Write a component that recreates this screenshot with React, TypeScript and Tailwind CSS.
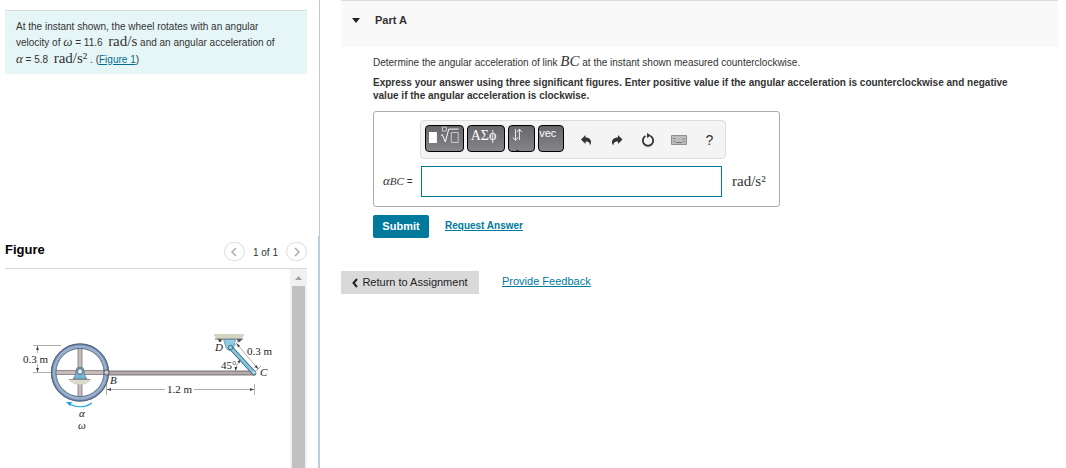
import type { ReactNode } from "react";

function MathText({ children }: { children: ReactNode }) {
    return <span className="font-['Liberation_Serif','DejaVu_Serif',serif] text-[15px] leading-none">{children}</span>;
}

function Greek({ children }: { children: ReactNode }) {
    return <i className="font-['Liberation_Serif','DejaVu_Serif',serif] text-[13px] leading-none">{children}</i>;
}

function ProblemStatement() {
    return (
        <div className="mt-[10px] mr-3 ml-[5px] min-h-16 border-t border-[#d5dcdc] bg-[#e6f6f7] px-[11px] pt-[9px] text-[10px] leading-[14px] text-[#333]">
            <p>
                At the instant shown, the wheel rotates with an angular
                <br />
                velocity of <Greek>ω</Greek> = 11.6 &nbsp;<MathText>rad/s</MathText> and an angular acceleration of
            </p>
            <p className="mt-px">
                <Greek>α</Greek> = 5.8 &nbsp;<MathText>rad/s²</MathText> . (<a href="#figure" className="text-[#006f8f] underline">Figure 1</a>)
            </p>
        </div>
    );
}

function WheelDiagram() {
    return (
        <svg viewBox="5 320 285 148" className="mt-[51px] block h-[148px] w-[285px] shrink-0" role="img" aria-label="Wheel linked to rod BC">
            <defs>
                <radialGradient id="rim" gradientUnits="userSpaceOnUse" cx="80" cy="372.5" r="29">
                    <stop offset=".8" stopColor="#7890ac" />
                    <stop offset=".9" stopColor="#a0b8d4" />
                    <stop offset="1" stopColor="#55668a" />
                </radialGradient>
            </defs>

            {/* rod */}
            <rect x="106" y="371" width="149" height="4" fill="#b5abab" stroke="#635c5e" strokeWidth=".8" />

            {/* wheel */}
            <rect x="78" y="347" width="4" height="51" fill="#c6baba" stroke="#81797d" strokeWidth=".8" />
            <rect x="54" y="370.500" width="52" height="4" fill="#c6baba" stroke="#81797d" strokeWidth=".8" />
            <circle cx="80" cy="372.5" r="26.5" fill="none" stroke="url(#rim)" strokeWidth="5" />
            <circle cx="80" cy="372.5" r="28.700" fill="none" stroke="#4e5b78" strokeWidth=".8" />
            <circle cx="80" cy="372.5" r="24" fill="none" stroke="#566985" strokeWidth=".8" />
            <path d="M69 379.500h21.500q-3 5-10.500 5t-11-5z" fill="#dcdccc" stroke="#bdbdae" strokeWidth=".5" />
            <path d="M69 379.500h21.500" stroke="#8c8c80" strokeWidth=".8" />
            <path d="M76 371a4 4 0 0 1 8 0l1 5 2 3H73l2-3z" fill="#79b5d1" stroke="#4c7389" strokeWidth=".7" />
            <circle cx="80" cy="371.500" r="3" fill="#c4ced4" stroke="#4b5662" strokeWidth=".8" />
            <circle cx="80" cy="371.500" r="1.200" fill="#f4f4f4" />
            <circle cx="106.500" cy="372.500" r="2.600" fill="#c6cbd2" stroke="#444" strokeWidth=".8" />

            {/* pin support and short link */}
            <path d="M214 334h30q0 4-4 4.500h-22q-4-.5-4-4.500z" fill="#d5d3c2" />
            <path d="M215 339h28" stroke="#6a6962" strokeWidth="1" />
            <path d="M218 339h4l-1 3h-2zM237 339h5l-2 3h-2z" fill="#555" />
            <path d="M223.500 339.500h12l-2 9q-4 4-7 0z" fill="#92c9e3" stroke="#56849d" strokeWidth=".7" />
            <path d="M231 348L254 373" stroke="#355f75" strokeWidth="4.500" strokeLinecap="round" />
            <path d="M231 348L254 373" stroke="#84c4e0" strokeWidth="3" strokeLinecap="round" />
            <circle cx="230.500" cy="347.500" r="2.300" fill="#8bc6df" stroke="#355f75" strokeWidth=".8" />
            <circle cx="254" cy="372.500" r="1.500" fill="#b8dce9" />

            {/* dimension lines */}
            <g stroke="#777" strokeWidth=".6" fill="none">
                <path d="M33 345.500h28M33 372.500h18M37.500 346v7M37.500 364v8" />
                <path d="M106.500 380v15M107 389.500h58M194 389.500h60M254.500 384v11" />
                <path d="M236.500 343.500L258 369M235 345l4-4M256 371l5-5M235.500 370q1-6 4-9" />
            </g>
            <g fill="#444">
                <path d="M37.500 346l-1.500 4h3zM37.500 372l-1.500-4h3z" />
                <path d="M107 389.500l4-1.500v3zM254 389.500l-4-1.500v3z" />
                <path d="M236.500 343.500l1.500 4 2-2zM258.500 369l-4-2 2-2z" />
                <path d="M240.500 359.500l-3 2 2 2zM235.500 371l-1-4h3z" />
            </g>
            <path d="M92 403q-10 7-23 1" stroke="#18a7e0" strokeWidth="1.200" fill="none" />
            <path d="M66 402l6 0-2 4z" fill="#18a7e0" />

            <g fill="#222" className="font-['Liberation_Serif',serif]" fontSize="11">
                <text x="23" y="363">0.3 m</text>
                <text x="167" y="393">1.2 m</text>
                <text x="247" y="355">0.3 m</text>
                <text x="221" y="369">45°</text>
                <g fontStyle="italic">
                    <text x="110" y="384">B</text>
                    <text x="215" y="351">D</text>
                    <text x="260" y="376">C</text>
                    <text x="79" y="417">α</text>
                    <text x="78" y="429">ω</text>
                </g>
            </g>
        </svg>
    );
}

function PagerButton({ label, path }: { label: string; path: string }) {
    return (
        <button type="button" aria-label={label} className="flex h-[19px] w-[21px] items-center justify-center rounded-full border border-[#ddd] bg-white">
            <svg viewBox="0 0 8 10" className="h-[10px] w-2" fill="none" stroke="#aaa" strokeWidth="1.500">
                <path d={path} />
            </svg>
        </button>
    );
}

function FigurePanel() {
    return (
        <section id="figure" className="flex grow flex-col border-r-2 border-[#b9cde0] pr-[11px] pl-[5px]">
            <div className="flex h-[33px] items-start border-b border-[#d9d9d9]">
                <h2 className="grow pt-[6px] text-[13px] leading-4 font-bold text-black">Figure</h2>
                <div className="flex items-center pt-[6px] text-[10px] leading-4 text-[#333]">
                    <PagerButton label="Previous figure" path="M6 1L2 5l4 4" />
                    <span className="px-2 pt-[2px]">1 of 1</span>
                    <PagerButton label="Next figure" path="M2 1l4 4-4 4" />
                </div>
            </div>
            <div className="flex grow">
                <div className="min-w-0 grow overflow-hidden">
                    <WheelDiagram />
                </div>
                <div className="flex w-[17px] shrink-0 flex-col items-center bg-[#f1f1f1]">
                    <svg viewBox="0 0 7 4" className="mt-[7px] mb-[6px] h-1 w-[7px]" aria-hidden="true">
                        <path d="M0 4L3.500 0 7 4z" fill="#a3a3a3" />
                    </svg>
                    <div className="w-[13px] grow bg-[#c1c1c1]" />
                </div>
            </div>
        </section>
    );
}

const KEY = "flex h-[27px] items-start overflow-hidden rounded-[4px] border border-black bg-linear-to-b from-[#66666b] to-[#858589] text-white";
const TOOL = "flex h-6 w-[31px] items-center justify-center text-[#333]";

function Toolbar() {
    return (
        <div className="flex h-[39px] items-start gap-[3px] rounded-[4px] border border-[#ddd] bg-[#f4f4f4] pt-1 pl-1">
            <button type="button" aria-label="Templates" className={`${KEY} w-[39px]`}>
                <svg viewBox="0 0 37 25" className="h-[25px] w-[37px]" fill="none" stroke="#fff" strokeWidth="1">
                    <path d="M3 6h8v11H3z" fill="#fff" stroke="none" />
                    <path d="M15 9.500l1.500-1 3 7.500 3.500-13h10" />
                    <path d="M16.500 1v4h4V1zM25.500 6.500h7v10h-7z" stroke="#ccc" />
                </svg>
            </button>
            <button type="button" className={`${KEY} w-[39px] pl-[3px] font-['Liberation_Serif',serif] text-[14px] leading-[19px]`}>ΑΣϕ</button>
            <button type="button" aria-label="Arrows" className={`${KEY} w-[27px]`}>
                <svg viewBox="0 0 25 25" className="size-[25px]" fill="none" stroke="#eee" strokeWidth="1">
                    <path d="M6.500 3v11M4 11.500l2.500 3 2.500-3M10.500 14V3M8 6l2.500-3L13 6" />
                    <path d="M7 24.500h3" stroke="#333" />
                </svg>
            </button>
            <button type="button" className={`${KEY} w-[26px] text-[11px] leading-[15px]`}>vec</button>
            <div className="flex pt-[3px] pl-[3px]">
                <button type="button" aria-label="Undo" className={TOOL}>
                    <svg viewBox="0 0 12 12" className="size-3" fill="currentColor">
                        <path d="M1 5.500L5.500 1v2.500C9 3.500 11 5.500 11 8c0 1.500-.5 2.500-1 3.500C10 9 9 7.500 5.500 7.500V10z" />
                    </svg>
                </button>
                <button type="button" aria-label="Redo" className={TOOL}>
                    <svg viewBox="0 0 12 12" className="size-3" fill="currentColor">
                        <path d="M11.500 5.500L7 1v2.500C3.500 3.500 1 5.500 1 8c0 1.500.5 2.500 1.500 3.500C2.500 9 3.500 7.500 7 7.500V10z" />
                    </svg>
                </button>
                <button type="button" aria-label="Reset" className={TOOL}>
                    <svg viewBox="0 0 14 14" className="size-[14px]" fill="none" stroke="currentColor" strokeWidth="1.800">
                        <path d="M9.500 3A5.200 5.200 0 1 1 4.500 3" />
                        <path d="M6 0l4 2.500L6 5z" fill="currentColor" stroke="none" />
                    </svg>
                </button>
                <button type="button" aria-label="Keyboard" className={TOOL}>
                    <svg viewBox="0 0 16 10" className="h-[10px] w-4">
                        <path d="M.5.5h15v9H.5z" fill="#bdbdbd" stroke="#8e8e8e" />
                        <path d="M2.500 3.500h2M11.500 4h2M2.500 6.500h1.500M12 6.500h1.500M5 7.500h6" stroke="#777" />
                    </svg>
                </button>
                <button type="button" aria-label="Help" className={`${TOOL} text-[14px]`}>?</button>
            </div>
        </div>
    );
}

function AnswerBox() {
    return (
        <div className="mt-[9px] flex w-[407px] rounded-[3px] border border-[#aaa] pt-2 pb-[9px]">
            <label htmlFor="answer" className="w-[47px] pt-[52px] pl-[9px] text-[10px] leading-5 whitespace-nowrap">
                <Greek>α</Greek>
                <i className="font-['Liberation_Serif',serif] text-[11px] leading-none">BC</i> =
            </label>
            <div className="-ml-px w-[306px]">
                <Toolbar />
                <div className="mt-[7px] ml-px flex items-center gap-[10px]">
                    <input id="answer" type="text" className="h-[31px] w-[301px] shrink-0 border border-[#007a99] bg-white px-2 text-sm outline-none" />
                    <MathText>rad/s²</MathText>
                </div>
            </div>
        </div>
    );
}

export default function App() {
    return (
        <div className="flex min-h-screen bg-white font-['Liberation_Sans',Arial,sans-serif] text-[#333]">
            <aside className="flex w-80 shrink-0 flex-col">
                <div className="flex min-h-[236px] flex-col border-r border-[#bcc6d4]">
                    <ProblemStatement />
                </div>
                <FigurePanel />
            </aside>

            <main className="min-w-0 grow pl-[21px]">
                <header className="mr-2 flex h-[47px] items-start border-t border-[#ddd] bg-[#f9f9f9] pt-[11px] pl-[11px]">
                    <svg viewBox="0 0 8 5" className="mt-[6px] h-[5px] w-2" aria-hidden="true">
                        <path d="M0 0h8L4 5z" fill="#222" />
                    </svg>
                    <h1 className="pl-[15px] text-[11px] leading-4 font-bold">Part A</h1>
                </header>

                <div className="pl-8 text-[10px]">
                    <p className="mt-[7px] leading-4">
                        Determine the angular acceleration of link <MathText><i>BC</i></MathText> at the instant shown measured counterclockwise.
                    </p>
                    <p className="mt-[5px] font-bold leading-[13px]">
                        Express your answer using three significant figures. Enter positive value if the angular acceleration is counterclockwise and negative
                        <br />
                        value if the angular acceleration is clockwise.
                    </p>
                    <AnswerBox />
                    <div className="mt-2 flex items-start gap-4">
                        <button type="button" className="h-[23px] w-14 rounded-[2px] bg-[#007a9c] text-[11px] font-bold text-white">Submit</button>
                        <a href="#request" className="pt-1 leading-[14px] font-bold text-[#007a9c] underline">Request Answer</a>
                    </div>
                </div>

                <div className="mt-[33px] flex items-start gap-[23px] text-[11px]">
                    <button type="button" className="flex h-[23px] w-[138px] items-center justify-center gap-1 bg-[#d9d9d9] text-[#222]">
                        <svg viewBox="0 0 6 10" className="h-[10px] w-[6px]" fill="none" stroke="currentColor" strokeWidth="2" aria-hidden="true">
                            <path d="M5 1L1.500 5 5 9" />
                        </svg>
                        Return to Assignment
                    </button>
                    <a href="#feedback" className="pt-[2px] leading-4 text-[#007a9c] underline">Provide Feedback</a>
                </div>
            </main>
        </div>
    );
}
